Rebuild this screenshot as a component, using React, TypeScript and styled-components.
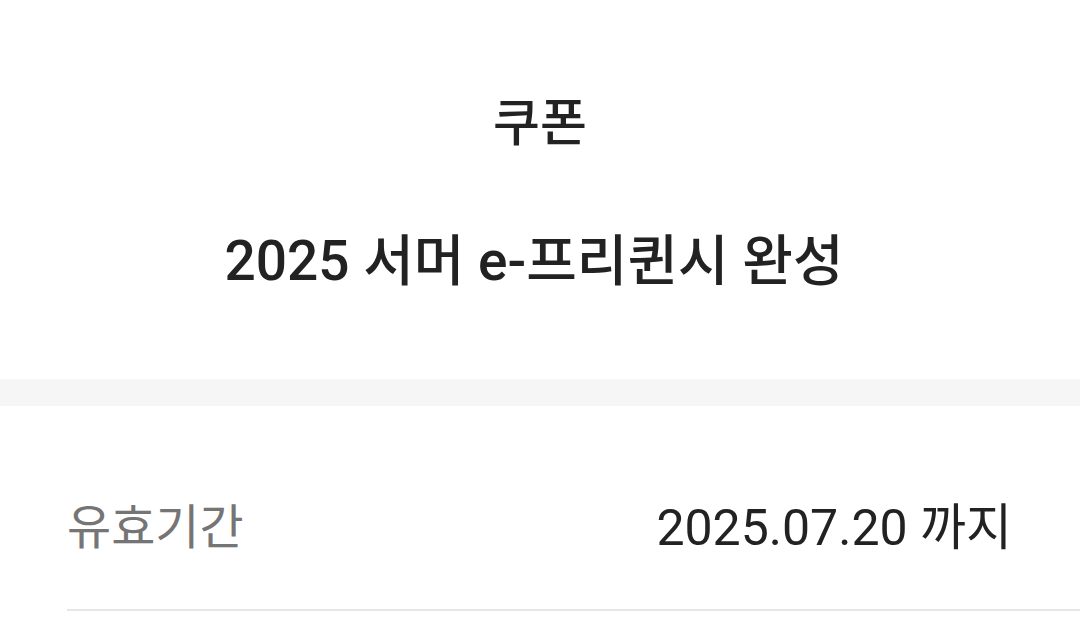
import React from "react";
import styled, { createGlobalStyle } from "styled-components";

const Global = createGlobalStyle`
  html, body { margin: 0; padding: 0; background: #ffffff; }
  body { font-family: "Roboto", "Noto Sans CJK KR", sans-serif; color: #222222; }
`;

const Page = styled.div`
  width: 1080px;
  display: flex;
  flex-direction: column;
`;

const Header = styled.header`
  height: 379px;
  display: flex;
  flex-direction: column;
  align-items: center;
`;

const Title = styled.h1`
  margin: 89px 0 0;
  font-family: "Noto Sans CJK KR", sans-serif;
  font-size: 51px;
  font-weight: 500;
  line-height: 60px;
  color: #222222;
`;

const CouponName = styled.h2`
  margin: 80px 0 0;
  padding-right: 12px;
  font-family: "Roboto", "Noto Sans CJK KR", sans-serif;
  font-size: 55px;
  font-weight: 500;
  line-height: 64px;
  color: #222222;
`;

const Band = styled.div`
  height: 27px;
  background: #f6f6f6;
`;

const InfoList = styled.div`
  padding-left: 67px;
`;

const InfoRow = styled.div`
  height: 205px;
  display: flex;
  align-items: center;
  justify-content: space-between;
  padding-right: 68px;
  border-bottom: 2px solid #e6e6e6;
  padding-top: 30px;
  box-sizing: border-box;
`;

const Label = styled.span`
  font-family: "Noto Sans CJK KR", sans-serif;
  font-size: 48px;
  font-weight: 400;
  color: #757575;
`;

const Value = styled.span`
  font-family: "Roboto", "Noto Sans CJK KR", sans-serif;
  font-size: 50px;
  font-weight: 400;
  color: #222222;
`;

export default function App() {
  return (
    <Page>
      <Global />
      <Header>
        <Title>쿠폰</Title>
        <CouponName>2025 서머 e-프리퀸시 완성</CouponName>
      </Header>
      <Band />
      <InfoList>
        <InfoRow>
          <Label>유효기간</Label>
          <Value>2025.07.20 까지</Value>
        </InfoRow>
      </InfoList>
    </Page>
  );
}
